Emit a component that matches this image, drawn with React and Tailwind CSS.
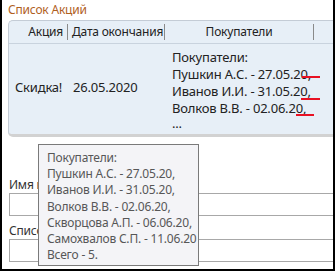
export default function App() {
  const font = { fontFamily: '"Noto Sans", "Open Sans", sans-serif' };
  const buyers = [
    ["Пушкин А.С. - 27.05.20", "w-[18px] top-[11px] left-[-6px]"],
    ["Иванов И.И. - 31.05.20", "w-[19px] top-[16px] left-[-7px]"],
    ["Волков В.В. - 02.06.20", "w-[18px] top-[15px] left-[-7px]"],
  ];
  return (
    <div
      className="relative w-[335px] h-[271px] bg-white border-l-2 border-r-2 border-b-2 border-black overflow-hidden text-[12px] tracking-[-0.2px]"
      style={font}
    >
      <div className="pl-[6px] pt-[2px] h-[20px] leading-[16px] text-[#b0601e]">Список Акций</div>
      <div className="ml-[6px] h-[117px] bg-[#e7eff7] border-l border-t border-[#c4ccd6] rounded-tl-[5px] rounded-bl-[5px] border-b-[3px] border-b-[#d2d2d2] flex flex-col">
        <div className="flex h-[23px] border-b border-[#c9d3de] text-[#222] leading-[22px]">
          <div className="w-[59px] pr-[4px] text-right border-r border-[#8a8a8a] my-[3px] leading-[16px]">Акция</div>
          <div className="w-[97px] pl-[4px] border-r border-[#8a8a8a] my-[3px] leading-[16px] whitespace-nowrap">Дата окончания</div>
          <div className="w-[149px] text-center border-r border-[#8a8a8a] my-[3px] leading-[16px]">Покупатели</div>
        </div>
        <div className="flex flex-1 text-[#222] text-[13px]">
          <div className="w-[59px] pl-[6px] flex items-center pb-[2px]">Скидка!</div>
          <div className="w-[97px] pl-[5px] flex items-center pb-[2px]">26.05.2020</div>
          <div className="w-[149px] pl-[7px] pt-[5px] leading-[17px] whitespace-nowrap">
            <div>Покупатели:</div>
            {buyers.map(([b, cls], i) => (
              <div key={i}>
                {b}
                <span className="relative">
                  ,
                  <span className={"absolute h-[2px] bg-[#e81123] " + cls} />
                </span>
              </div>
            ))}
            <div className="leading-[12px]">...</div>
          </div>
        </div>
      </div>
      <div className="pl-[7px] pt-[40px] leading-[16px] text-[#333]">Имя в</div>
      <div className="ml-[7px] h-[23px] border border-[#a8a8a8] border-r-0"></div>
      <div className="pl-[7px] pt-[7px] leading-[16px] text-[#333]">Список</div>
      <div className="ml-[7px] h-[23px] border border-[#a8a8a8] border-r-0"></div>

      <div className="absolute left-[36px] top-[144px] w-[161px] h-[122px] bg-[#f4f4f7] border border-[#7a7a7a] pl-[8px] pt-[5px] leading-[16.2px] text-[#575757] whitespace-nowrap overflow-hidden">
        <div>Покупатели:</div>
        <div>Пушкин А.С. - 27.05.20,</div>
        <div>Иванов И.И. - 31.05.20,</div>
        <div>Волков В.В. - 02.06.20,</div>
        <div>Скворцова А.П. - 06.06.20,</div>
        <div>Самохвалов С.П. - 11.06.20</div>
        <div>Всего - 5.</div>
      </div>
    </div>
  );
}
